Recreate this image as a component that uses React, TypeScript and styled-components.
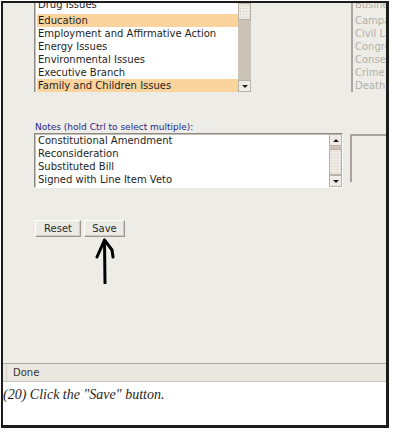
import React from 'react';
import styled, { createGlobalStyle } from 'styled-components';

const GlobalStyle = createGlobalStyle`
  html, body {
    margin: 0;
    padding: 0;
    background: #ffffff;
  }
`;

const Frame = styled.div`
  margin: 1px 0 0 1px;
  width: 383px;
  border-style: solid;
  border-color: #1c1c1c;
  border-width: 2px 3px 3px 2px;
  background: #ffffff;
`;

const Viewport = styled.div`
  height: 360px;
  overflow: hidden;
  background: #edece6;
  padding-left: 31px;
  box-sizing: border-box;
  font-family: 'DejaVu Sans', Verdana, sans-serif;
  font-size: 10px;
  color: #1e1e1e;
`;

const TopRow = styled.div`
  display: flex;
  height: 89px;
  overflow: hidden;
`;

const ListBox = styled.div<{ $width: number; $height: number }>`
  display: flex;
  width: ${(p) => p.$width}px;
  height: ${(p) => p.$height}px;
  flex: none;
  box-sizing: border-box;
  background: #ffffff;
  border-left: 2px solid #8f8b84;
`;

const TopList = styled(ListBox)`
  border-left: 1px solid #8f8b84;
  box-shadow: inset 1px 0 0 #c4c0b8;
`;

const NotesList = styled(ListBox)`
  border-top: 1px solid #8f8b84;
  border-left: 1px solid #8f8b84;
  border-right: 1px solid #ffffff;
  border-bottom: 1px solid #ffffff;
  box-shadow: inset 1px 1px 0 #c4c0b8;
`;

const Items = styled.div`
  flex: 1;
  overflow: hidden;
  padding-left: 2px;
`;

const Item = styled.div<{ $selected?: boolean; $cut?: boolean; $muted?: boolean }>`
  height: 13px;
  line-height: 13px;
  padding-left: 1px;
  white-space: nowrap;
  background: ${(p) => (p.$selected ? '#fbd49d' : 'transparent')};
  color: ${(p) => (p.$muted ? '#b5b1aa' : '#1e1e1e')};
  margin-top: ${(p) => (p.$cut ? '-5px' : '0')};
  padding-bottom: ${(p) => (p.$cut ? '3px' : '0')};
`;

const Scrollbar = styled.div`
  width: 13px;
  flex: none;
  display: flex;
  flex-direction: column;
  background: #cbc3b7;
`;

const Thumb = styled.div<{ $size: number }>`
  height: ${(p) => p.$size}px;
  flex: none;
  box-sizing: border-box;
  border: 1px solid #b7afa3;
  background-color: #eeebe5;
  background-image: radial-gradient(#cfc8bd 0.7px, transparent 0.8px);
  background-size: 3px 3px;
`;

const Track = styled.div<{ $size?: number }>`
  flex: ${(p) => (p.$size ? 'none' : '1')};
  height: ${(p) => (p.$size ? `${p.$size}px` : 'auto')};
`;

const ArrowButton = styled.div`
  height: 12px;
  flex: none;
  box-sizing: border-box;
  display: flex;
  align-items: center;
  justify-content: center;
  background: #efece7;
  border: 1px solid #b9b2a6;
`;

const Triangle = styled.span<{ $up?: boolean }>`
  width: 0;
  height: 0;
  border-left: 3px solid transparent;
  border-right: 3px solid transparent;
  ${(p) =>
    p.$up ? 'border-bottom: 3px solid #1e1e1e;' : 'border-top: 3px solid #1e1e1e;'}
`;

const Spacer = styled.div<{ $width: number }>`
  width: ${(p) => p.$width}px;
  flex: none;
`;

const DisabledList = styled.div`
  flex: 1;
  border-left: 2px solid #a9a59e;
  padding-left: 1px;
  overflow: hidden;
`;

const Label = styled.div`
  margin-top: 29px;
  height: 12px;
  line-height: 12px;
  padding-left: 1px;
  font-size: 9px;
  color: #28288a;
`;

const NotesRow = styled.div`
  display: flex;
  align-items: flex-start;
  height: 55px;
`;

const SideBox = styled.div`
  margin-left: 7px;
  margin-top: 1px;
  flex: 1;
  height: 48px;
  border-top: 2px solid #a9a59e;
  border-left: 2px solid #a9a59e;
  box-sizing: border-box;
`;

const ButtonRow = styled.div`
  display: flex;
  gap: 3px;
  margin-top: 32px;
  padding-left: 1px;
`;

const Button = styled.button<{ $width: number }>`
  width: ${(p) => p.$width}px;
  height: 17px;
  padding: 0;
  font-family: 'DejaVu Sans', Verdana, sans-serif;
  font-size: 10px;
  color: #2a2a2a;
  background: #eceae5;
  border-style: solid;
  border-width: 1px;
  border-color: #ffffff #9b978f #9b978f #ffffff;
  box-shadow: inset -1px -1px 0 #cfcbc4;
`;

const Pointer = styled.svg`
  display: block;
  margin: 1px 0 0 59px;
`;

const StatusBar = styled.div`
  height: 19px;
  box-sizing: border-box;
  border-top: 1px solid #aaa69e;
  border-bottom: 1px solid #c9c5bd;
  background: #ebe8e2;
  padding-left: 3px;
  display: flex;
`;

const StatusPanel = styled.div`
  flex: 1;
  border-left: 1px solid #d2cec6;
  padding-left: 6px;
  line-height: 17px;
  font-family: 'DejaVu Sans', Verdana, sans-serif;
  font-size: 10px;
  color: #333333;
`;

const Caption = styled.div`
  height: 43px;
  box-sizing: border-box;
  padding: 5px 0 0 0;
  font-family: 'Liberation Serif', 'Times New Roman', serif;
  font-style: italic;
  font-size: 14px;
  line-height: 16px;
  color: #1e1e1e;
`;

const topics = [
  'Drug Issues',
  'Education',
  'Employment and Affirmative Action',
  'Energy Issues',
  'Environmental Issues',
  'Executive Branch',
  'Family and Children Issues',
];

const selectedTopics = ['Education', 'Family and Children Issues'];

const otherTopics = [
  'Business and Consumers',
  'Campaign Finance',
  'Civil Liberties',
  'Congressional Affairs',
  'Conservation',
  'Crime',
  'Death Penalty',
];

const notes = [
  'Constitutional Amendment',
  'Reconsideration',
  'Substituted Bill',
  'Signed with Line Item Veto',
];

const App = () => {
  return (
    <>
      <GlobalStyle />
      <Frame>
        <Viewport>
          <TopRow>
            <TopList $width={217} $height={89}>
              <Items>
                {topics.map((t, i) => (
                  <Item key={t} $cut={i === 0} $selected={selectedTopics.includes(t)}>
                    {t}
                  </Item>
                ))}
              </Items>
              <Scrollbar>
                <Thumb $size={17} />
                <Track />
                <ArrowButton>
                  <Triangle />
                </ArrowButton>
              </Scrollbar>
            </TopList>
            <Spacer $width={100} />
            <DisabledList>
              {otherTopics.map((t, i) => (
                <Item key={t} $cut={i === 0} $muted>
                  {t}
                </Item>
              ))}
            </DisabledList>
          </TopRow>

          <Label>Notes (hold Ctrl to select multiple):</Label>
          <NotesRow>
            <NotesList $width={309} $height={55}>
              <Items>
                {notes.map((n) => (
                  <Item key={n}>{n}</Item>
                ))}
              </Items>
              <Scrollbar>
                <ArrowButton>
                  <Triangle $up />
                </ArrowButton>
                <Track $size={3} />
                <Thumb $size={26} />
                <Track />
                <ArrowButton>
                  <Triangle />
                </ArrowButton>
              </Scrollbar>
            </NotesList>
            <SideBox />
          </NotesRow>

          <ButtonRow>
            <Button $width={46}>Reset</Button>
            <Button $width={41}>Save</Button>
          </ButtonRow>
          <Pointer width="26" height="46" viewBox="0 0 26 46">
            <path
              d="M12 45 L11.5 3 M11.5 2 L4 19 M11.5 2 L19 12 L20 19"
              fill="none"
              stroke="#000000"
              strokeWidth="3"
              strokeLinecap="round"
              strokeLinejoin="round"
            />
          </Pointer>
        </Viewport>
        <StatusBar>
          <StatusPanel>Done</StatusPanel>
        </StatusBar>
        <Caption>(20) Click the "Save" button.</Caption>
      </Frame>
    </>
  );
};

export default App;
